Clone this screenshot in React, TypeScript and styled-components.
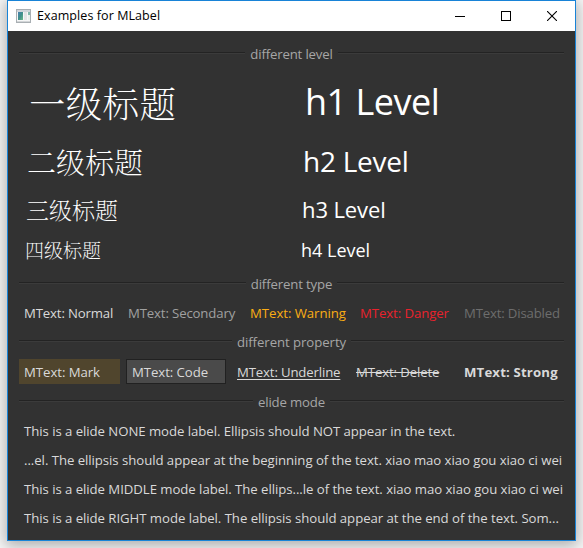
import React from 'react';
import styled, { createGlobalStyle, css } from 'styled-components';

const GlobalStyle = createGlobalStyle`
  html, body { margin: 0; padding: 0; background: #f8f8f8; }
  * { box-sizing: border-box; }
`;

const Desktop = styled.div`
  width: 583px;
  height: 548px;
  padding: 0 7px 7px;
  overflow: hidden;
`;

const Window = styled.div`
  width: 569px;
  height: 541px;
  display: flex;
  flex-direction: column;
  border: 1px solid #1883d7;
  background: #323232;
  box-shadow: 0 3px 14px 2px rgba(0, 0, 0, 0.3);
  font-family: 'Open Sans', 'Noto Sans', sans-serif;
  font-size: 13.2px;
  color: #d9d9d9;
`;

const TitleBar = styled.header`
  height: 30px;
  flex: none;
  display: flex;
  align-items: center;
  padding-left: 8px;
  background: #fff;
  color: #000;
`;

const Title = styled.span`
  flex: 1;
  margin-left: 6px;
  font-size: 12.5px;
  line-height: 30px;
  letter-spacing: 0.08px;
`;

const WindowButton = styled.span`
  width: 46px;
  height: 30px;
  display: flex;
  align-items: center;
  justify-content: center;
`;

const Body = styled.main`
  flex: 1;
  display: flex;
  flex-direction: column;
  padding: 14px 11px 0;
`;

const DividerRow = styled.div`
  height: 18px;
  flex: none;
  display: flex;
  align-items: center;
  gap: 5px;
  color: #a6a6a6;
`;

const Rule = styled.i`
  flex: 1;
  height: 2px;
  margin-top: -2px;
  border-top: 1px solid #232323;
  border-bottom: 1px solid #3b3b3b;
`;

const Label = styled.span<{ $spacing?: number; $width?: number }>`
  display: block;
  flex: none;
  line-height: 18px;
  white-space: nowrap;
  letter-spacing: ${({ $spacing = 0 }) => $spacing}px;
  ${({ $width }) => $width && css`width: ${$width}px;`}
`;

const Levels = styled.div`
  display: grid;
  grid-template-columns: 276px 1fr;
  grid-template-rows: 78px 41px 48px 45px;
  height: 212px;
  color: #fff;
`;

const Heading = styled.div<{ $size: number; $left: number; $top: number; $spacing?: number }>`
  padding: ${({ $top }) => $top}px 0 0 ${({ $left }) => $left}px;
  font-size: ${({ $size }) => $size}px;
  line-height: 40px;
  letter-spacing: ${({ $spacing = 0 }) => $spacing}px;
  height: 40px;
  white-space: nowrap;
`;

const ChineseHeading = styled(Heading)`
  font-family: 'Noto Serif CJK SC', SimSun, 'Noto Sans CJK SC', serif;
  font-weight: 200;
`;

const TypeRow = styled.div`
  height: 40px;
  display: flex;
  align-items: center;
  padding-left: 5px;
`;

const typeColors = {
  normal: '#d9d9d9',
  secondary: '#a0a0a0',
  warning: '#faad14',
  danger: '#e8222d',
  disabled: '#6d6d6d',
};

const TypeLabel = styled(Label)<{ $kind: keyof typeof typeColors }>`
  color: ${({ $kind }) => typeColors[$kind]};
`;

const PropertyRow = styled.div`
  height: 42px;
  display: flex;
  align-items: center;
  padding-bottom: 1px;
`;

const Mark = styled(Label)`
  height: 25px;
  padding-left: 5px;
  line-height: 26px;
  margin-right: 6px;
  background: #50452d;
`;

const Code = styled(Label)`
  height: 25px;
  padding-left: 5px;
  line-height: 24px;
  margin-right: 11px;
  border: 1px solid #212121;
  background: #4a4a4a;
`;

const Underline = styled(Label)`
  text-decoration: underline;
  text-decoration-thickness: 1px;
  text-underline-offset: 2px;
  text-decoration-skip-ink: none;
`;

const Delete = styled(Label)`
  text-decoration: line-through;
  text-decoration-thickness: 1px;
`;

const Strong = styled(Label)`
  font-weight: 700;
`;

const ElideList = styled.div`
  padding: 6px 0 0 5px;
`;

const ElideLine = styled(Label)`
  height: 29px;
  line-height: 29px;
`;

function AppIcon() {
  return (
    <svg width="15" height="14" viewBox="0 0 15 14" shapeRendering="crispEdges">
      <defs>
        <linearGradient id="pane" x1="0" y1="0" x2="1" y2="1">
          <stop offset="0" stopColor="#4a7fb0" />
          <stop offset="0.5" stopColor="#3f8f8b" />
          <stop offset="1" stopColor="#6db989" />
        </linearGradient>
      </defs>
      <rect width="15" height="14" fill="#a9afb3" />
      <rect x="1" y="1" width="13" height="2" fill="#cfd5da" />
      <rect x="1" y="3" width="13" height="9" fill="#f6f7f7" />
      <rect x="2" y="3" width="5" height="8" fill="url(#pane)" />
      <rect x="8" y="3" width="3" height="8" fill="#e3e5e6" />
      <rect x="12" y="3" width="2" height="3" fill="#83b9ad" />
      <rect x="12" y="6" width="2" height="5" fill="#e9efec" />
      <rect x="1" y="12" width="13" height="1" fill="#d3d6d8" />
    </svg>
  );
}

function Divider({ text, spacing }: { text: string; spacing: number }) {
  return (
    <DividerRow>
      <Rule />
      <Label $spacing={spacing}>{text}</Label>
      <Rule />
    </DividerRow>
  );
}

export default function App() {
  return (
    <>
      <GlobalStyle />
      <Desktop>
        <Window>
          <TitleBar>
            <AppIcon />
            <Title>Examples for MLabel</Title>
            <WindowButton>
              <svg width="10" height="10"><path d="M0 5.5H10" stroke="#000" /></svg>
            </WindowButton>
            <WindowButton>
              <svg width="10" height="10"><rect x=".5" y=".5" width="9" height="9" fill="none" stroke="#000" /></svg>
            </WindowButton>
            <WindowButton>
              <svg width="10" height="10"><path d="M0 0L10 10M10 0L0 10" stroke="#000" strokeWidth="1.1" /></svg>
            </WindowButton>
          </TitleBar>
          <Body>
            <Divider text="different level" spacing={-0.16} />
            <Levels>
              <ChineseHeading $size={36.5} $left={10} $top={19} $spacing={0.3}>一级标题</ChineseHeading>
              <Heading $size={36} $left={10} $top={19} $spacing={-0.5}>h1 Level</Heading>
              <ChineseHeading $size={29} $left={8} $top={1}>二级标题</ChineseHeading>
              <Heading $size={28} $left={8} $top={0} $spacing={-0.25}>h2 Level</Heading>
              <ChineseHeading $size={23} $left={7} $top={8}>三级标题</ChineseHeading>
              <Heading $size={22} $left={7} $top={7} $spacing={-0.1}>h3 Level</Heading>
              <ChineseHeading $size={19} $left={6} $top={0}>四级标题</ChineseHeading>
              <Heading $size={18} $left={6} $top={0}>h4 Level</Heading>
            </Levels>
            <Divider text="different type" spacing={-0.14} />
            <TypeRow>
              <TypeLabel $kind="normal" $width={104} $spacing={-0.15}>MText: Normal</TypeLabel>
              <TypeLabel $kind="secondary" $width={122} $spacing={-0.14}>MText: Secondary</TypeLabel>
              <TypeLabel $kind="warning" $width={110} $spacing={-0.05}>MText: Warning</TypeLabel>
              <TypeLabel $kind="danger" $width={104} $spacing={-0.08}>MText: Danger</TypeLabel>
              <TypeLabel $kind="disabled" $spacing={-0.17}>MText: Disabled</TypeLabel>
            </TypeRow>
            <Divider text="different property" spacing={-0.06} />
            <PropertyRow>
              <Mark $width={101} $spacing={-0.05}>MText: Mark</Mark>
              <Code $width={100} $spacing={-0.07}>MText: Code</Code>
              <Underline $width={119} $spacing={-0.15}>MText: Underline</Underline>
              <Delete $width={108} $spacing={-0.12}>MText: Delete</Delete>
              <Strong $spacing={0.16}>MText: Strong</Strong>
            </PropertyRow>
            <Divider text="elide mode" spacing={-0.15} />
            <ElideList>
              <ElideLine $spacing={-0.05}>This is a elide NONE mode label. Ellipsis should NOT appear in the text.</ElideLine>
              <ElideLine $spacing={-0.05}>...el. The ellipsis should appear at the beginning of the text. xiao mao xiao gou xiao ci wei</ElideLine>
              <ElideLine $spacing={-0.05}>This is a elide MIDDLE mode label. The ellips...le of the text. xiao mao xiao gou xiao ci wei</ElideLine>
              <ElideLine $spacing={-0.05}>This is a elide RIGHT mode label. The ellipsis should appear at the end of the text. Som...</ElideLine>
            </ElideList>
          </Body>
        </Window>
      </Desktop>
    </>
  );
}
